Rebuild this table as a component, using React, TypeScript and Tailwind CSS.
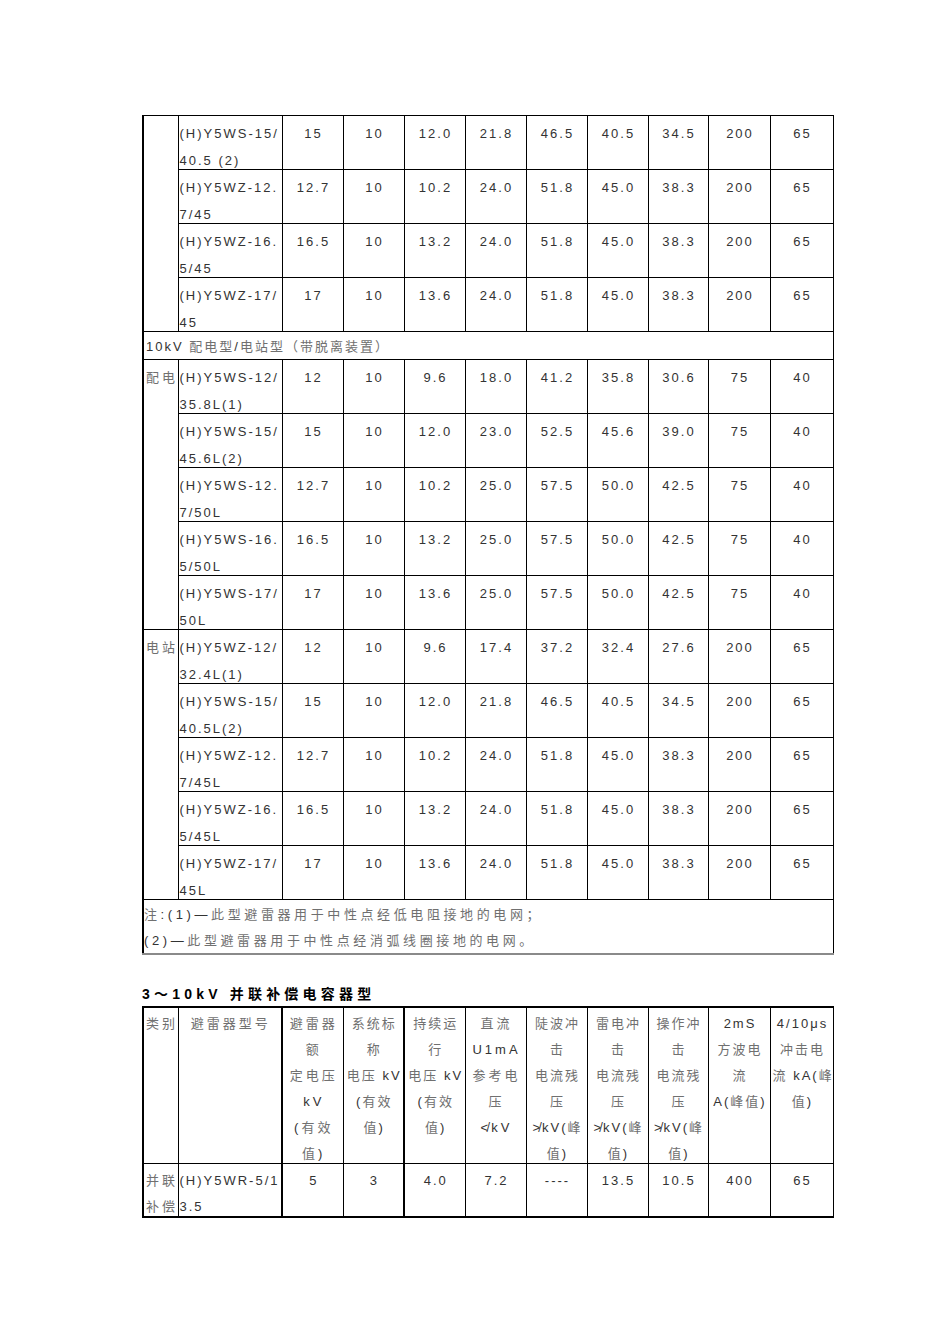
import React from "react";

type Row = { model: [string, string]; vals: string[] };

const CJK = /([\u2E80-\u9FFF\u3000-\u303F\uFF00-\uFFEF]+)/;

// lighter grey for the chinese runs, latin stays darker
function T({ s }: { s: string }) {
  return (
    <>
      {s.split(CJK).map((p, i) =>
        p && CJK.test(p) ? (
          <span key={i} className="text-[#707070]">
            {p}
          </span>
        ) : (
          <React.Fragment key={i}>{p}</React.Fragment>
        )
      )}
    </>
  );
}

const r = (a: string, b: string, ...vals: string[]): Row => ({ model: [a, b], vals });

const topRows: Row[] = [
  r("(H)Y5WS-15/", "40.5 (2)", "15", "10", "12.0", "21.8", "46.5", "40.5", "34.5", "200", "65"),
  r("(H)Y5WZ-12.", "7/45", "12.7", "10", "10.2", "24.0", "51.8", "45.0", "38.3", "200", "65"),
  r("(H)Y5WZ-16.", "5/45", "16.5", "10", "13.2", "24.0", "51.8", "45.0", "38.3", "200", "65"),
  r("(H)Y5WZ-17/", "45", "17", "10", "13.6", "24.0", "51.8", "45.0", "38.3", "200", "65"),
];

const peiRows: Row[] = [
  r("(H)Y5WS-12/", "35.8L(1)", "12", "10", "9.6", "18.0", "41.2", "35.8", "30.6", "75", "40"),
  r("(H)Y5WS-15/", "45.6L(2)", "15", "10", "12.0", "23.0", "52.5", "45.6", "39.0", "75", "40"),
  r("(H)Y5WS-12.", "7/50L", "12.7", "10", "10.2", "25.0", "57.5", "50.0", "42.5", "75", "40"),
  r("(H)Y5WS-16.", "5/50L", "16.5", "10", "13.2", "25.0", "57.5", "50.0", "42.5", "75", "40"),
  r("(H)Y5WS-17/", "50L", "17", "10", "13.6", "25.0", "57.5", "50.0", "42.5", "75", "40"),
];

const zhanRows: Row[] = [
  r("(H)Y5WZ-12/", "32.4L(1)", "12", "10", "9.6", "17.4", "37.2", "32.4", "27.6", "200", "65"),
  r("(H)Y5WS-15/", "40.5L(2)", "15", "10", "12.0", "21.8", "46.5", "40.5", "34.5", "200", "65"),
  r("(H)Y5WZ-12.", "7/45L", "12.7", "10", "10.2", "24.0", "51.8", "45.0", "38.3", "200", "65"),
  r("(H)Y5WZ-16.", "5/45L", "16.5", "10", "13.2", "24.0", "51.8", "45.0", "38.3", "200", "65"),
  r("(H)Y5WZ-17/", "45L", "17", "10", "13.6", "24.0", "51.8", "45.0", "38.3", "200", "65"),
];

const widths = ["w-[35px]", "w-[104px]", "w-[61px]", "w-[61px]", "w-[61px]", "w-[61px]", "w-[61px]", "w-[61px]", "w-[60px]", "w-[62px]", "w-[63px]"];

function Cols() {
  return (
    <colgroup>
      {widths.map((w, i) => (
        <col key={i} className={w} />
      ))}
    </colgroup>
  );
}

function Group({ rows, cat }: { rows: Row[]; cat: string }) {
  return (
    <>
      {rows.map((row, i) => (
        <tr key={i}>
          {i === 0 && (
            <td rowSpan={rows.length} className="border border-black border-l-2 align-top p-0">
              <div className="pt-[4px] pl-[2px] leading-[27px] tracking-[3px] whitespace-nowrap">
                <T s={cat} />
              </div>
            </td>
          )}
          <td className="border border-black align-top p-0">
            <div className="h-[53px] pt-[4px] pl-[1px] leading-[27px] tracking-[2px] whitespace-nowrap">
              {row.model[0]}
              <br />
              {row.model[1]}
            </div>
          </td>
          {row.vals.map((v, j) => (
            <td key={j} className="border border-black align-top p-0 text-center">
              <div className="h-[53px] pt-[4px] pl-[2px] leading-[27px] tracking-[2px]">{v}</div>
            </td>
          ))}
        </tr>
      ))}
    </>
  );
}

const headCells: { lines: string[]; left?: boolean; thick?: boolean; tight?: boolean }[] = [
  { lines: ["类别"], left: true },
  { lines: ["避雷器型号"] },
  { lines: ["避雷器", "额", "定电压", "kV", "(有效", "值)"], thick: true },
  { lines: ["系统标", "称", "电压 kV", "(有效", "值)"], tight: true },
  { lines: ["持续运", "行", "电压 kV", "(有效", "值)"], thick: true, tight: true },
  { lines: ["直流", "U1mA", "参考电", "压", "≮kV"] },
  { lines: ["陡波冲", "击", "电流残", "压", "≯kV(峰", "值)"], tight: true },
  { lines: ["雷电冲", "击", "电流残", "压", "≯kV(峰", "值)"], tight: true },
  { lines: ["操作冲", "击", "电流残", "压", "≯kV(峰", "值)"], tight: true },
  { lines: ["2mS", "方波电", "流", "A(峰值)"], tight: true },
  { lines: ["4/10μs", "冲击电", "流 kA(峰", "值)"], tight: true },
];

const capRow = ["(H)Y5WR-5/1", "5", "3", "4.0", "7.2", "----", "13.5", "10.5", "400", "65"];

export default function App() {
  return (
    <div className="min-h-screen bg-white pt-[115px] pl-[142px] text-[13px] text-[#333] font-['Liberation_Sans','Noto_Sans_CJK_SC',sans-serif]">
      <table className="table-fixed border-collapse w-[691px]">
        <Cols />
        <tbody>
          <Group rows={topRows} cat="" />
          <tr>
            <td colSpan={11} className="border border-black border-l-2 p-0">
              <div className="h-[27px] leading-[30px] pl-[2px] tracking-[2px] whitespace-nowrap">
                <T s="10kV 配电型/电站型（带脱离装置）" />
              </div>
            </td>
          </tr>
          <Group rows={peiRows} cat="配电" />
          <Group rows={zhanRows} cat="电站" />
          <tr>
            <td colSpan={11} className="border border-black border-l-2 border-b-2 border-b-[#8a8a8a] p-0">
              <div className="h-[53px] pt-[2px] leading-[26px] tracking-[3.6px] whitespace-nowrap">
                <T s="注:(1)—此型避雷器用于中性点经低电阻接地的电网；" />
                <br />
                <T s="(2)—此型避雷器用于中性点经消弧线圈接地的电网。" />
              </div>
            </td>
          </tr>
        </tbody>
      </table>

      <div className="mt-[29px] leading-[20px] text-[14px] font-bold text-black tracking-[4.2px]">
        3～10kV 并联补偿电容器型
      </div>

      <table className="mt-[2px] table-fixed border-collapse w-[691px] border-t-2 border-black">
        <Cols />
        <tbody>
          <tr>
            {headCells.map((c, i) => (
              <td
                key={i}
                className={`border border-black align-top p-0 ${i === 0 || c.thick ? "border-l-2" : ""} ${
                  c.left ? "text-left" : "text-center"
                }`}
              >
                <div
                  className={`h-[155px] pt-[3px] pl-[2px] leading-[26px] whitespace-nowrap ${
                    c.tight ? "tracking-[2px]" : "tracking-[3px]"
                  }`}
                >
                  {c.lines.map((l, j) => (
                    <div key={j}>
                      <T s={l} />
                    </div>
                  ))}
                </div>
              </td>
            ))}
          </tr>
          <tr>
            <td className="border border-black border-l-2 border-b-2 align-top p-0">
              <div className="h-[52px] pt-[4px] pl-[2px] leading-[26px] tracking-[3px] whitespace-nowrap">
                <T s="并联" />
                <br />
                <T s="补偿" />
              </div>
            </td>
            <td className="border border-black border-b-2 align-top p-0">
              <div className="h-[52px] pt-[4px] pl-[1px] leading-[26px] tracking-[2px] whitespace-nowrap">
                {capRow[0]}
                <br />
                3.5
              </div>
            </td>
            {capRow.slice(1).map((v, j) => (
              <td
                key={j}
                className={`border border-black border-b-2 align-top p-0 text-center ${j === 0 || j === 2 ? "border-l-2" : ""}`}
              >
                <div className="h-[52px] pt-[4px] pl-[2px] leading-[26px] tracking-[2px]">{v}</div>
              </td>
            ))}
          </tr>
        </tbody>
      </table>
    </div>
  );
}
